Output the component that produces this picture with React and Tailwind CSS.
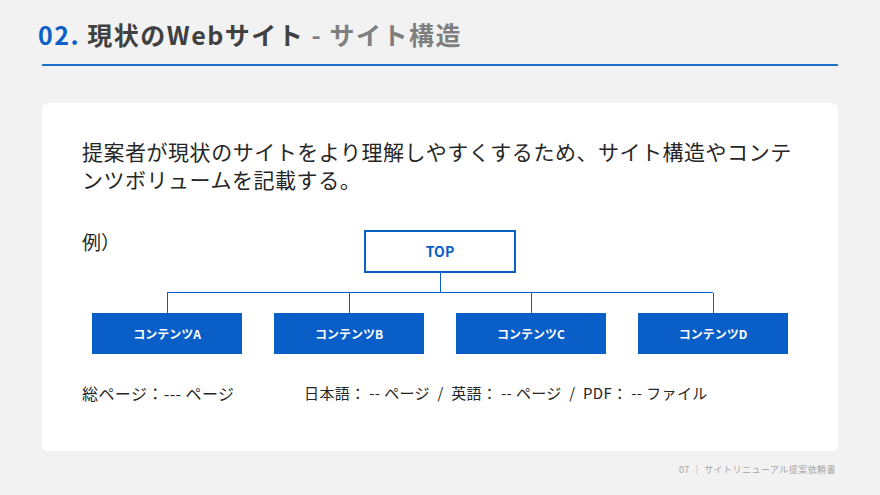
const boxes = ["コンテンツA", "コンテンツB", "コンテンツC", "コンテンツD"];

export default function App() {
  return (
    <div
      className="w-[880px] h-[495px] bg-[#f2f2f2] flex flex-col px-[42px]"
      style={{ fontFamily: '"Noto Sans CJK JP", "Noto Sans", sans-serif' }}
    >
      <div className="h-[66px] flex items-center pt-1 border-b-2 border-[#1f6fc8]">
        <h1 className="-ml-1 text-[25px] font-bold leading-none tracking-[0.06em] text-[#404040]">
          <span className="text-[#0a60c8]">02.</span> 現状のWebサイト{" "}
          <span className="text-[#7f7f7f]">- サイト構造</span>
        </h1>
      </div>
      <div className="mt-[37px] h-[348px] bg-white rounded-md px-10 pt-[34px] relative">
        <p className="text-[21px] leading-[28px] text-[#262626] tracking-wide">
          提案者が現状のサイトをより理解しやすくするため、サイト構造やコンテンツボリュームを記載する。
        </p>
        <p className="absolute left-10 top-[125px] text-[19px] text-[#262626]">例）</p>
        <div className="mt-[37px] ml-[10px] w-[696px] flex flex-col items-center">
          <div className="w-[152px] h-[43px] border-2 border-[#0a5ec8] flex items-center justify-center text-[14px] font-bold text-[#0a5ec8]">
            TOP
          </div>
          <div className="w-px h-[19px] bg-[#0a5ec8]" />
          <div className="w-full px-[75px]">
            <div className="h-px bg-[#0a5ec8]" />
          </div>
          <div className="w-full grid grid-cols-4 gap-8">
            {boxes.map((b) => (
              <div key={b} className="flex flex-col items-center">
                <div className="w-px h-[20px] bg-[#0a5ec8]" />
                <div className="w-[150px] h-[41px] bg-[#0a5ec8] text-white text-[12px] font-bold flex items-center justify-center">
                  {b}
                </div>
              </div>
            ))}
          </div>
        </div>
        <div className="mt-[27px] flex items-center text-[#262626]">
          <span className="text-[16px] w-[222px] tracking-wide">総ページ：--- ページ</span>
          <span className="text-[15px] tracking-wide whitespace-pre">日本語： -- ページ  /  英語： -- ページ  /  PDF： -- ファイル</span>
        </div>
      </div>
      <div className="flex justify-end pr-[2px] mt-[12px] text-[9px] text-[#a6a6a6] tracking-wider">
        07 ｜ サイトリニューアル提案依頼書
      </div>
    </div>
  );
}
